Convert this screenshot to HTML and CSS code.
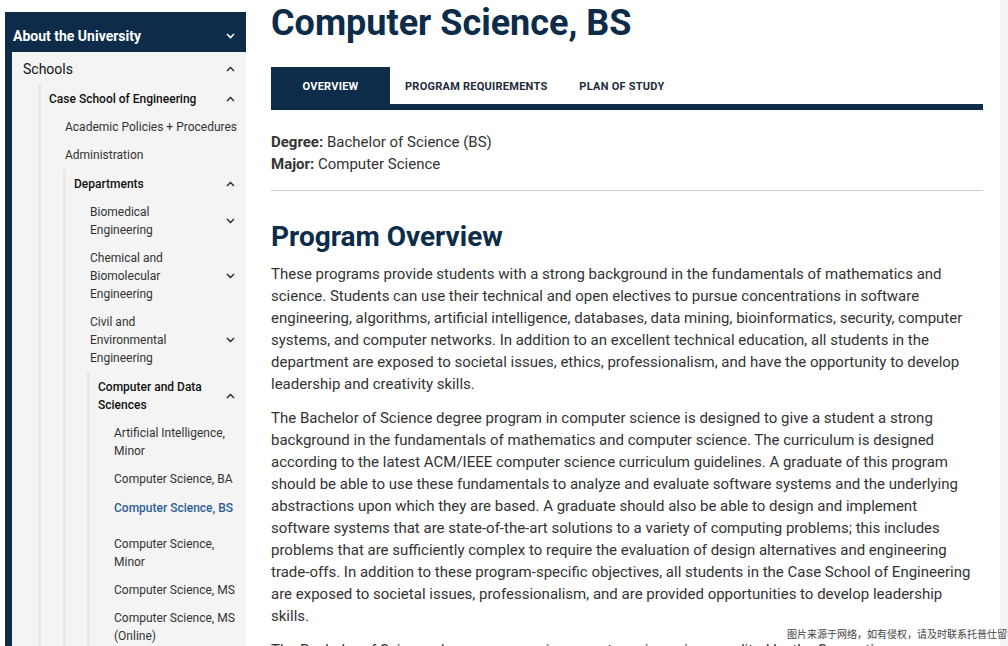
FILE: index.html
```html
<!DOCTYPE html>
<html lang="en">
<head>
<meta charset="utf-8">
<title>Computer Science, BS</title>
<link rel="stylesheet" href="styles.css">
</head>
<body>
<div class="page">
  <nav class="sidenav">
    <div class="nav-head">
      <span>About the University</span>
      <svg class="chev" width="9" height="6" viewBox="0 0 9 6"><polyline points="1,1 4.5,4.5 8,1" fill="none" stroke="#fff" stroke-width="1.6"/></svg>
    </div>
    <div class="nav-body">
      <div class="row lvl1">
        <span class="label">Schools</span>
        <svg class="chev" width="9" height="6" viewBox="0 0 9 6"><polyline points="1,5 4.5,1.5 8,5" fill="none" stroke="#222" stroke-width="1.3"/></svg>
      </div>
      <ul class="sub sub1">
        <li class="group">
          <div class="row title">
            <span class="label">Case School of Engineering</span>
            <svg class="chev" width="9" height="6" viewBox="0 0 9 6"><polyline points="1,5 4.5,1.5 8,5" fill="none" stroke="#222" stroke-width="1.3"/></svg>
          </div>
          <ul class="sub">
            <li class="row leaf"><span class="label">Academic Policies + Procedures</span></li>
            <li class="row leaf"><span class="label">Administration</span></li>
            <li class="group">
              <div class="row title">
                <span class="label">Departments</span>
                <svg class="chev" width="9" height="6" viewBox="0 0 9 6"><polyline points="1,5 4.5,1.5 8,5" fill="none" stroke="#222" stroke-width="1.3"/></svg>
              </div>
              <ul class="sub sub3">
                <li class="row leaf closed">
                  <span class="label">Biomedical<br>Engineering</span>
                  <svg class="chev" width="9" height="6" viewBox="0 0 9 6"><polyline points="1,1 4.5,4.5 8,1" fill="none" stroke="#222" stroke-width="1.3"/></svg>
                </li>
                <li class="row leaf closed">
                  <span class="label">Chemical and<br>Biomolecular<br>Engineering</span>
                  <svg class="chev" width="9" height="6" viewBox="0 0 9 6"><polyline points="1,1 4.5,4.5 8,1" fill="none" stroke="#222" stroke-width="1.3"/></svg>
                </li>
                <li class="row leaf closed">
                  <span class="label">Civil and<br>Environmental<br>Engineering</span>
                  <svg class="chev" width="9" height="6" viewBox="0 0 9 6"><polyline points="1,1 4.5,4.5 8,1" fill="none" stroke="#222" stroke-width="1.3"/></svg>
                </li>
                <li class="group">
                  <div class="row title">
                    <span class="label">Computer and Data<br>Sciences</span>
                    <svg class="chev" width="9" height="6" viewBox="0 0 9 6"><polyline points="1,5 4.5,1.5 8,5" fill="none" stroke="#222" stroke-width="1.3"/></svg>
                  </div>
                  <ul class="sub">
                    <li class="row leaf"><span class="label">Artificial Intelligence,<br>Minor</span></li>
                    <li class="row leaf"><span class="label">Computer Science, BA</span></li>
                    <li class="row leaf active"><span class="label">Computer Science, BS</span></li>
                    <li class="row leaf"><span class="label">Computer Science,<br>Minor</span></li>
                    <li class="row leaf"><span class="label">Computer Science, MS</span></li>
                    <li class="row leaf"><span class="label">Computer Science, MS<br>(Online)</span></li>
                  </ul>
                </li>
              </ul>
            </li>
          </ul>
        </li>
      </ul>
    </div>
  </nav>

  <main class="content">
    <h1 class="title-main">Computer Science, BS</h1>
    <div class="tabs">
      <div class="tab active">Overview</div>
      <div class="tab">Program Requirements</div>
      <div class="tab">Plan of Study</div>
    </div>
    <div class="tab-bar"></div>

    <div class="facts">
      <div><strong>Degree:</strong> Bachelor of Science (BS)</div>
      <div><strong>Major:</strong> Computer Science</div>
    </div>
    <hr class="rule">

    <h2 class="section-title">Program Overview</h2>
    <p>These programs provide students with a strong background in the fundamentals of mathematics and science. Students can use their technical and open electives to pursue concentrations in software engineering, algorithms, artificial intelligence, databases, data mining, bioinformatics, security, computer systems, and computer networks. In addition to an excellent technical education, all students in the department are exposed to societal issues, ethics, professionalism, and have the opportunity to develop leadership and creativity skills.</p>
    <p>The Bachelor of Science degree program in computer science is designed to give a student a strong background in the fundamentals of mathematics and computer science. The curriculum is designed according to the latest ACM/IEEE computer science curriculum guidelines. A graduate of this program should be able to use these fundamentals to analyze and evaluate software systems and the underlying abstractions upon which they are based. A graduate should also be able to design and implement software systems that are state-of-the-art solutions to a variety of computing problems; this includes problems that are sufficiently complex to require the evaluation of design alternatives and engineering trade-offs. In addition to these program-specific objectives, all students in the Case School of Engineering are exposed to societal issues, professionalism, and are provided opportunities to develop leadership skills.</p>
    <p>The Bachelor of Science degree program in computer science is accredited by the Computing Accreditation Commission of ABET.</p>
  </main>
  <div class="gutter"></div>
</div>
<div class="watermark">图片来源于网络，如有侵权，请及时联系托普仕留学删除</div>
</body>
</html>
```
FILE: styles.css
```css
* { box-sizing: border-box; }
html, body { margin: 0; padding: 0; }
body {
  background: #fff;
  font-family: Roboto, "Liberation Sans", sans-serif;
  color: #333;
  width: 1008px;
  height: 646px;
  overflow: hidden;
  position: relative;
}
.page {
  display: flex;
  align-items: flex-start;
  height: 646px;
}

/* ---------- side navigation ---------- */
.sidenav {
  width: 241px;
  margin: 12px 0 0 5px;
  flex: none;
  font-size: 12px;
}
.nav-head {
  height: 40px;
  background: #0c2c49;
  color: #fff;
  font-weight: 700;
  font-size: 14px;
  display: flex;
  align-items: center;
  justify-content: space-between;
  padding: 7px 11px 0 8px;
}
.nav-body {
  background: #f4f4f4;
  border-left: 7px solid #0c2c49;
  height: 600px;
  padding-top: 1px;
}
.chev { flex: none; }
.label { white-space: nowrap; }
.row {
  display: flex;
  align-items: center;
  justify-content: space-between;
}
.lvl1 {
  height: 31px;
  padding: 0 11px 0 11px;
  font-size: 14px;
  color: #111;
}
ul.sub {
  list-style: none;
  margin: 0;
  padding: 0 0 0 22px;
}
ul.sub1 { padding-left: 26px; }
ul.sub3 { padding-left: 21px; }
.group {
  border-left: 3px solid #e8e8e8;
}
.title {
  padding: 6px 11px 5px 8px;
  line-height: 18px;
  font-weight: 500;
  color: #111;
}
.leaf {
  padding: 5px 11px 5px 2px;
  line-height: 18px;
  color: #333;
}
.sub3 > .leaf { padding-left: 3px; }
.leaf.active { color: #2d5e9a; font-weight: 500; padding-top: 6px; padding-bottom: 13px; }

/* ---------- main content ---------- */
.content {
  width: 712px;
  margin-left: 25px;
  flex: none;
}
.title-main {
  margin: 0;
  font-size: 36px;
  line-height: 46px;
  font-weight: 700;
  color: #0c2c49;
}
.tabs {
  display: flex;
  margin-top: 21px;
}
.tab {
  height: 37px;
  min-width: 119px;
  padding: 2px 15px 0;
  display: flex;
  align-items: center;
  justify-content: center;
  font-size: 11px;
  font-weight: 700;
  letter-spacing: 0.25px;
  text-transform: uppercase;
  color: #1c2a3a;
}
.tab.active { background: #0c2c49; color: #fff; }
.tab-bar { height: 6px; background: #0c2c49; }

.facts {
  margin-top: 21px;
  font-size: 15px;
  line-height: 22px;
}
.facts strong { font-weight: 700; }
.rule {
  border: 0;
  border-top: 1px solid #ccc;
  margin: 15px 0 0;
}
.section-title {
  margin: 29px 0 9px;
  font-size: 28px;
  line-height: 34px;
  font-weight: 700;
  color: #0c2c49;
}
.content p {
  margin: 0 0 12px;
  max-width: 706px;
  font-size: 15px;
  line-height: 22px;
}

.gutter {
  margin-left: auto;
  width: 8px;
  height: 646px;
  background: #f4f4f4;
  flex: none;
}
.watermark {
  position: absolute;
  left: 787px;
  top: 628px;
  font-family: "Noto Sans CJK SC", sans-serif;
  font-size: 10px;
  line-height: 12px;
  color: #444;
  white-space: nowrap;
}
```
